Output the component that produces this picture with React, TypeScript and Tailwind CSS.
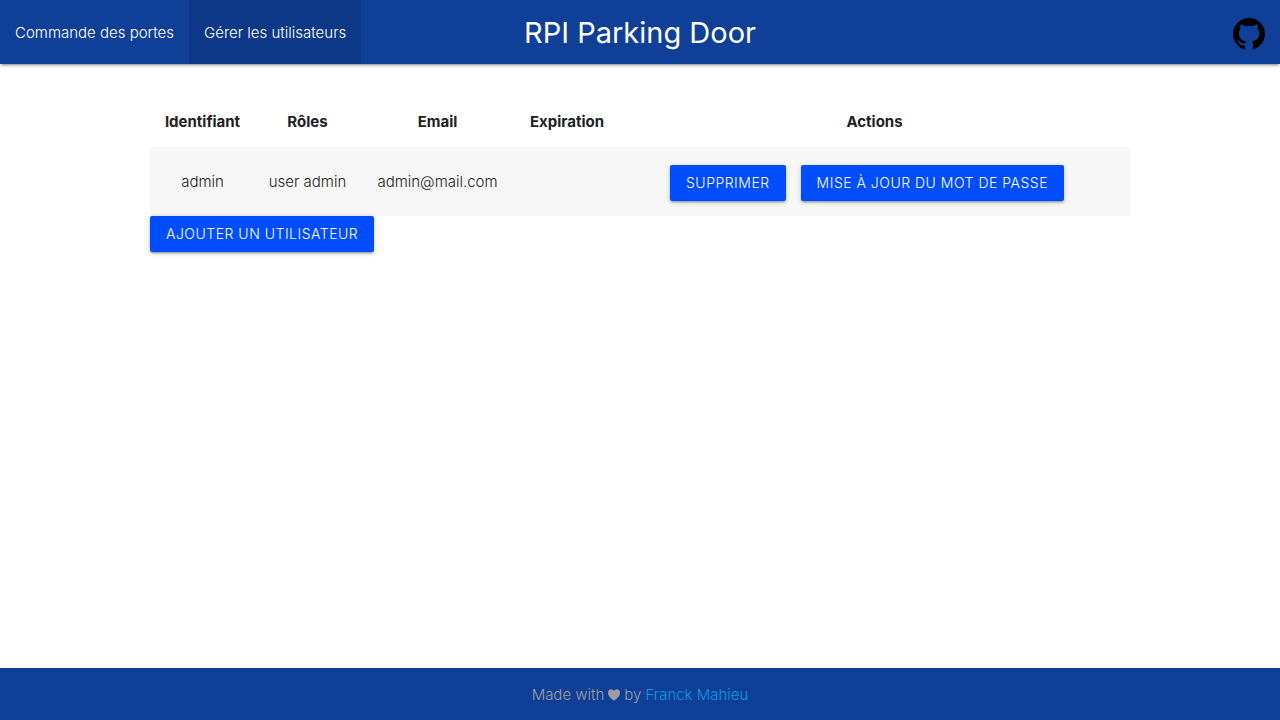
import React from "react";

const button =
  "h-9 rounded-xs bg-[#004cff] px-4 text-sm leading-9 font-light tracking-[0.5px] uppercase text-white shadow-[0_2px_2px_0_rgba(0,0,0,0.14),0_3px_1px_-2px_rgba(0,0,0,0.12),0_1px_5px_0_rgba(0,0,0,0.2)]";

const users = [{ id: "admin", roles: "user admin", email: "admin@mail.com", expiration: "" }];

function GithubMark() {
  return (
    <svg viewBox="0 0 16 16" className="size-8" fill="currentColor" aria-hidden="true">
      <path d="M8 0C3.58 0 0 3.58 0 8c0 3.54 2.29 6.53 5.47 7.59.4.07.55-.17.55-.38 0-.19-.01-.82-.01-1.49-2.01.37-2.53-.49-2.69-.94-.09-.23-.48-.94-.82-1.13-.28-.15-.68-.52-.01-.53.63-.01 1.08.58 1.23.82.72 1.21 1.87.87 2.33.66.07-.52.28-.87.51-1.07-1.78-.2-3.64-.89-3.64-3.95 0-.87.31-1.59.82-2.15-.08-.2-.36-1.02.08-2.12 0 0 .67-.21 2.2.82.64-.18 1.32-.27 2-.27s1.36.09 2 .27c1.53-1.04 2.2-.82 2.2-.82.44 1.1.16 1.92.08 2.12.51.56.82 1.27.82 2.15 0 3.07-1.87 3.75-3.65 3.95.29.25.54.73.54 1.48 0 1.07-.01 1.93-.01 2.2 0 .21.15.46.55.38A8.01 8.01 0 0 0 16 8c0-4.42-3.58-8-8-8Z" />
    </svg>
  );
}

function Heart() {
  return (
    <svg viewBox="0 0 12 12" className="h-3 w-3" fill="currentColor" role="img" aria-label="love">
      <path d="M6 11.6C3.2 9.8 0 7.1 0 3.7 0 1.7 1.3.2 3.1.2 4.4.2 5.4.9 6 2 6.6.9 7.6.2 8.9.2 10.7.2 12 1.7 12 3.7c0 3.4-3.2 6.1-6 7.9Z" />
    </svg>
  );
}

export default function App() {
  return (
    <div className="flex min-h-screen flex-col bg-white font-['Inter',sans-serif] text-[15px] font-light text-[#212121]">
      <header className="grid h-16 grid-cols-[1fr_auto_1fr] items-center bg-[#0f3f97] text-white shadow-[0_2px_2px_0_rgba(0,0,0,0.14),0_3px_1px_-2px_rgba(0,0,0,0.12),0_1px_5px_0_rgba(0,0,0,0.2)]">
        <nav className="flex h-16 items-stretch whitespace-nowrap">
          <a href="#doors" className="flex items-center px-[15px] pt-0.5">Commande des portes</a>
          <a href="#users" className="flex items-center bg-[#0d3887] px-[15px] pt-0.5">Gérer les utilisateurs</a>
        </nav>
        <h1 className="pt-0.5 text-[29px] font-normal">RPI Parking Door</h1>
        <a href="#github" aria-label="GitHub" className="mt-1 justify-self-end pr-[15px] text-black">
          <GithubMark />
        </a>
      </header>
      <main className="mx-auto w-full max-w-[980px] flex-1 pt-8">
        <table className="w-full table-fixed border-collapse text-center">
          <colgroup>
            <col className="w-[105px]" />
            <col className="w-[105px]" />
            <col className="w-[155px]" />
            <col className="w-[104px]" />
            <col />
          </colgroup>
          <thead>
            <tr className="h-[51px]">
              {["Identifiant", "Rôles", "Email", "Expiration", "Actions"].map((label) => (
                <th key={label} scope="col" className="pt-0.5">{label}</th>
              ))}
            </tr>
          </thead>
          <tbody>
            {users.map((u) => (
              <tr key={u.id} className="h-[69px] bg-[#f7f7f7]">
                <td className="pt-0.5">{u.id}</td>
                <td className="pt-0.5">{u.roles}</td>
                <td className="pt-0.5">{u.email}</td>
                <td className="pt-0.5">{u.expiration}</td>
                <td className="pt-0.5">
                  <div className="flex justify-center gap-[15px] pr-[15px]">
                    <button type="button" className={button}>Supprimer</button>
                    <button type="button" className={button}>Mise à jour du mot de passe</button>
                  </div>
                </td>
              </tr>
            ))}
          </tbody>
        </table>
        <button type="button" className={button}>Ajouter un utilisateur</button>
      </main>
      <footer className="flex h-13 items-center justify-center gap-1 bg-[#0f3f97] pt-0.5 text-[#9e9e9e]">
        <span>Made with</span>
        <Heart />
        <span>by</span>
        <a href="#author" className="text-[#039be5]">Franck Mahieu</a>
      </footer>
    </div>
  );
}
